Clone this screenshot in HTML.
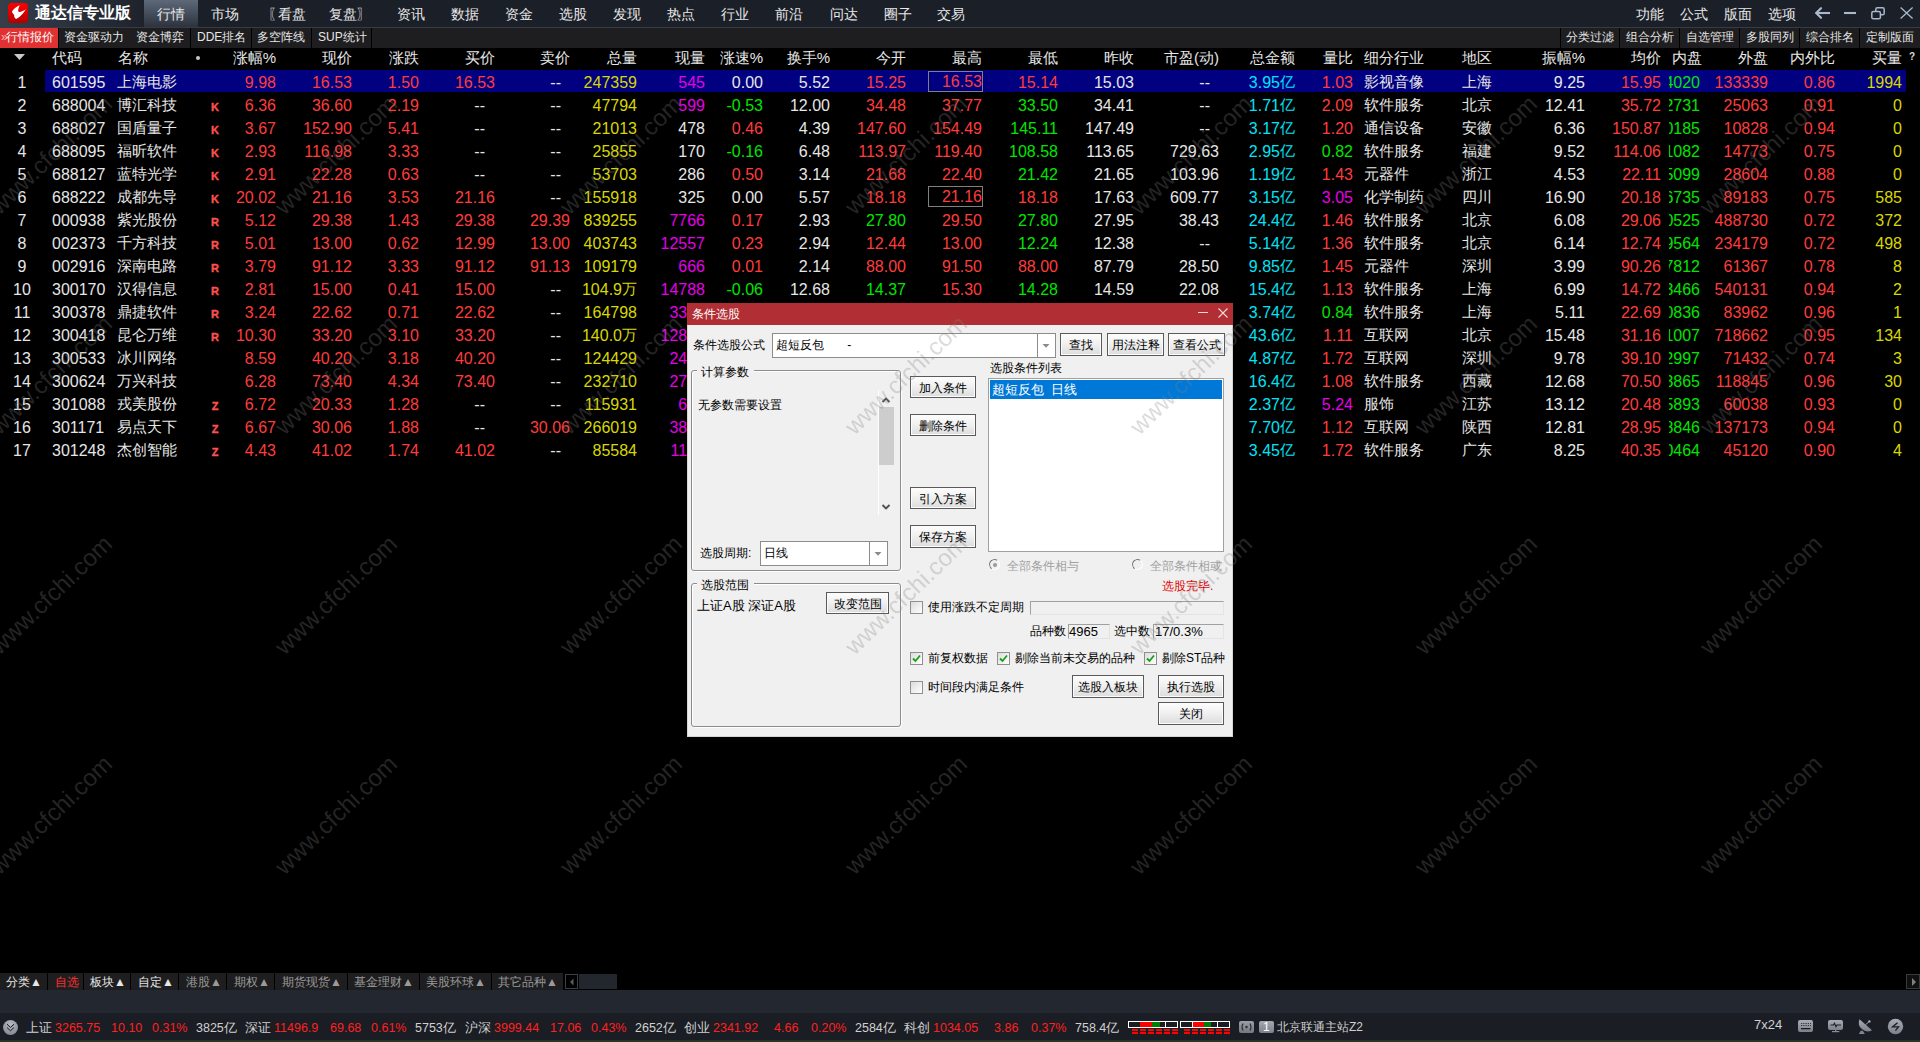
<!DOCTYPE html><html><head><meta charset="utf-8"><title>通达信专业版</title><style>
html,body{margin:0;padding:0;width:1920px;height:1042px;overflow:hidden;background:#000;font-family:'Liberation Sans', sans-serif;}
.t{position:absolute;white-space:nowrap;line-height:1;}
.b{position:absolute;box-sizing:border-box;}
.clip{position:absolute;overflow:hidden;}

</style></head><body>
<div class="b" style="left:0px;top:0px;width:1920px;height:27px;background:#1b1f27;"></div>
<div class="b" style="left:0px;top:0px;width:144px;height:27px;background:linear-gradient(to right,#363e4a,#2a313c 50%,#1e232b);"></div>
<div class="b" style="left:144px;top:0px;width:54px;height:27px;background:linear-gradient(#5d6879,#2c333d);"></div>
<div class="b" style="left:0px;top:27px;width:1920px;height:1px;background:#363c45;"></div>
<div class="b" style="left:8px;top:3px;width:20px;height:20px;border-radius:4px;background:linear-gradient(#ff0000,#b00000);"></div>
<svg style="position:absolute;left:8px;top:3px" width="20" height="20" viewBox="0 0 20 20"><path d="M11.8 2.2 C9 3.2 5.5 5.5 4 8.5 C4.3 10 5.3 11 6.2 11.8 C5.9 13.5 6.5 15.5 8.2 15.9 C11.5 15 15 10.5 18 6.3 C15.5 8 12.5 9.2 10.6 8.8 C9.6 8 10.5 5 11.8 2.2 Z" fill="#fff"/></svg>
<div class="t" style="left:35px;top:5px;font-size:16px;color:#ffffff;font-weight:bold;">通达信专业版</div>
<div class="t" style="left:157px;top:7px;font-size:14px;color:#e8e8e8;">行情</div>
<div class="t" style="left:211px;top:7px;font-size:14px;color:#e8e8e8;">市场</div>
<div class="t" style="left:268px;top:7px;font-size:14px;color:#e8e8e8;">〖</div>
<div class="t" style="left:278px;top:7px;font-size:14px;color:#e8e8e8;">看盘</div>
<div class="t" style="left:329px;top:7px;font-size:14px;color:#e8e8e8;">复盘</div>
<div class="t" style="left:357px;top:7px;font-size:14px;color:#e8e8e8;">〗</div>
<div class="t" style="left:397px;top:7px;font-size:14px;color:#e8e8e8;">资讯</div>
<div class="t" style="left:451px;top:7px;font-size:14px;color:#e8e8e8;">数据</div>
<div class="t" style="left:505px;top:7px;font-size:14px;color:#e8e8e8;">资金</div>
<div class="t" style="left:559px;top:7px;font-size:14px;color:#e8e8e8;">选股</div>
<div class="t" style="left:613px;top:7px;font-size:14px;color:#e8e8e8;">发现</div>
<div class="t" style="left:667px;top:7px;font-size:14px;color:#e8e8e8;">热点</div>
<div class="t" style="left:721px;top:7px;font-size:14px;color:#e8e8e8;">行业</div>
<div class="t" style="left:775px;top:7px;font-size:14px;color:#e8e8e8;">前沿</div>
<div class="t" style="left:830px;top:7px;font-size:14px;color:#e8e8e8;">问达</div>
<div class="t" style="left:884px;top:7px;font-size:14px;color:#e8e8e8;">圈子</div>
<div class="t" style="left:937px;top:7px;font-size:14px;color:#e8e8e8;">交易</div>
<div class="t" style="left:1636px;top:7px;font-size:14px;color:#e8e8e8;">功能</div>
<div class="t" style="left:1680px;top:7px;font-size:14px;color:#e8e8e8;">公式</div>
<div class="t" style="left:1724px;top:7px;font-size:14px;color:#e8e8e8;">版面</div>
<div class="t" style="left:1768px;top:7px;font-size:14px;color:#e8e8e8;">选项</div>
<svg style="position:absolute;left:1810px;top:4px" width="110" height="20" viewBox="0 0 110 20"><path d="M6 9 H20" stroke="#a9b8ce" stroke-width="2.1" fill="none"/><path d="M11 4.2 L6.2 9 L11 13.8" stroke="#a9b8ce" stroke-width="2.2" fill="none" stroke-linecap="round"/><path d="M34 9 H46" stroke="#a9b8ce" stroke-width="2.1"/><rect x="65.8" y="3.8" width="8.4" height="7" rx="1.6" stroke="#a9b8ce" stroke-width="1.5" fill="none"/><rect x="61.8" y="7.6" width="8.6" height="7.2" rx="1.6" stroke="#a9b8ce" stroke-width="1.5" fill="#1b1f27"/><path d="M90.6 3.6 L102.6 14.6 M102.6 3.6 L90.6 14.6" stroke="#a9b8ce" stroke-width="1.3"/></svg>
<div class="b" style="left:0px;top:28px;width:1920px;height:20px;background:#1e1e20;"></div>
<div class="b" style="left:0px;top:28px;width:58px;height:20px;background:#e03232;"></div>
<div class="t" style="left:1px;top:31px;font-size:12px;color:#ffb0b0;">»</div>
<div class="t" style="left:6px;top:31px;font-size:12px;color:#ffffff;">行情报价</div>
<div class="t" style="left:64px;top:31px;font-size:12px;color:#e6e6e6;">资金驱动力</div>
<div class="t" style="left:136px;top:31px;font-size:12px;color:#e6e6e6;">资金博弈</div>
<div class="t" style="left:197px;top:31px;font-size:12px;color:#e6e6e6;">DDE排名</div>
<div class="t" style="left:257px;top:31px;font-size:12px;color:#e6e6e6;">多空阵线</div>
<div class="t" style="left:318px;top:31px;font-size:12px;color:#e6e6e6;">SUP统计</div>
<div class="b" style="left:58px;top:28px;width:1px;height:20px;background:#000;"></div>
<div class="b" style="left:190px;top:28px;width:1px;height:20px;background:#000;"></div>
<div class="b" style="left:251px;top:28px;width:1px;height:20px;background:#000;"></div>
<div class="b" style="left:311px;top:28px;width:1px;height:20px;background:#000;"></div>
<div class="b" style="left:371px;top:28px;width:1px;height:20px;background:#000;"></div>
<div class="t" style="left:1566px;top:31px;font-size:12px;color:#e6e6e6;">分类过滤</div>
<div class="t" style="left:1626px;top:31px;font-size:12px;color:#e6e6e6;">组合分析</div>
<div class="t" style="left:1686px;top:31px;font-size:12px;color:#e6e6e6;">自选管理</div>
<div class="t" style="left:1746px;top:31px;font-size:12px;color:#e6e6e6;">多股同列</div>
<div class="t" style="left:1806px;top:31px;font-size:12px;color:#e6e6e6;">综合排名</div>
<div class="t" style="left:1866px;top:31px;font-size:12px;color:#e6e6e6;">定制版面</div>
<div class="b" style="left:1560px;top:28px;width:1px;height:20px;background:#000;"></div>
<div class="b" style="left:1619px;top:28px;width:1px;height:20px;background:#000;"></div>
<div class="b" style="left:1679px;top:28px;width:1px;height:20px;background:#000;"></div>
<div class="b" style="left:1739px;top:28px;width:1px;height:20px;background:#000;"></div>
<div class="b" style="left:1799px;top:28px;width:1px;height:20px;background:#000;"></div>
<div class="b" style="left:1859px;top:28px;width:1px;height:20px;background:#000;"></div>
<svg style="position:absolute;left:14px;top:54px" width="12" height="8"><path d="M0 0 H11 L5.5 6 Z" fill="#c8c8c8"/></svg>
<div class="t" style="left:52px;top:50px;font-size:15px;color:#e6e6e6;">代码</div>
<div class="t" style="left:118px;top:50px;font-size:15px;color:#e6e6e6;">名称</div>
<div class="b" style="left:196px;top:56px;width:4px;height:4px;border-radius:2px;background:#c8c8c8"></div>
<div class="t" style="right:1644px;top:50px;font-size:15px;color:#e6e6e6;">涨幅%</div>
<div class="t" style="right:1568px;top:50px;font-size:15px;color:#e6e6e6;">现价</div>
<div class="t" style="right:1501px;top:50px;font-size:15px;color:#e6e6e6;">涨跌</div>
<div class="t" style="right:1425px;top:50px;font-size:15px;color:#e6e6e6;">买价</div>
<div class="t" style="right:1350px;top:50px;font-size:15px;color:#e6e6e6;">卖价</div>
<div class="t" style="right:1283px;top:50px;font-size:15px;color:#e6e6e6;">总量</div>
<div class="t" style="right:1215px;top:50px;font-size:15px;color:#e6e6e6;">现量</div>
<div class="t" style="right:1157px;top:50px;font-size:15px;color:#e6e6e6;">涨速%</div>
<div class="t" style="right:1090px;top:50px;font-size:15px;color:#e6e6e6;">换手%</div>
<div class="t" style="right:1014px;top:50px;font-size:15px;color:#e6e6e6;">今开</div>
<div class="t" style="right:938px;top:50px;font-size:15px;color:#e6e6e6;">最高</div>
<div class="t" style="right:862px;top:50px;font-size:15px;color:#e6e6e6;">最低</div>
<div class="t" style="right:786px;top:50px;font-size:15px;color:#e6e6e6;">昨收</div>
<div class="t" style="right:701px;top:50px;font-size:15px;color:#e6e6e6;">市盈(动)</div>
<div class="t" style="right:625px;top:50px;font-size:15px;color:#e6e6e6;">总金额</div>
<div class="t" style="right:567px;top:50px;font-size:15px;color:#e6e6e6;">量比</div>
<div class="t" style="right:335px;top:50px;font-size:15px;color:#e6e6e6;">振幅%</div>
<div class="t" style="right:259px;top:50px;font-size:15px;color:#e6e6e6;">均价</div>
<div class="t" style="right:152px;top:50px;font-size:15px;color:#e6e6e6;">外盘</div>
<div class="t" style="right:85px;top:50px;font-size:15px;color:#e6e6e6;">内外比</div>
<div class="t" style="right:18px;top:50px;font-size:15px;color:#e6e6e6;">买量</div>
<div class="t" style="left:1364px;top:50px;font-size:15px;color:#e6e6e6;">细分行业</div>
<div class="t" style="left:1462px;top:50px;font-size:15px;color:#e6e6e6;">地区</div>
<div class="t" style="left:1672px;top:50px;font-size:15px;color:#e6e6e6;">内盘</div>
<div class="t" style="left:1909px;top:52px;font-size:10px;color:#d8d8d8;font-weight:bold;">?</div>
<div class="b" style="left:45px;top:70px;width:1861px;height:22px;background:#000080;"></div>
<div class="t" style="left:-178px;width:400px;text-align:center;top:75px;font-size:16px;color:#e6e6e6;">1</div>
<div class="t" style="left:52px;top:75px;font-size:16px;color:#e6e6e6;">601595</div>
<div class="t" style="left:117px;top:74px;font-size:15px;color:#e6e6e6;">上海电影</div>
<div class="t" style="right:1644px;top:75px;font-size:16px;color:#ff3c3c;">9.98</div>
<div class="t" style="right:1568px;top:75px;font-size:16px;color:#ff3c3c;">16.53</div>
<div class="t" style="right:1501px;top:75px;font-size:16px;color:#ff3c3c;">1.50</div>
<div class="t" style="right:1425px;top:75px;font-size:16px;color:#ff3c3c;">16.53</div>
<div class="t" style="right:1359px;top:75px;font-size:16px;color:#e6e6e6;">--</div>
<div class="t" style="right:1283px;top:75px;font-size:16px;color:#d8d800;">247359</div>
<div class="t" style="right:1215px;top:75px;font-size:16px;color:#e600e6;">545</div>
<div class="t" style="right:1157px;top:75px;font-size:16px;color:#e6e6e6;">0.00</div>
<div class="t" style="right:1090px;top:75px;font-size:16px;color:#e6e6e6;">5.52</div>
<div class="t" style="right:1014px;top:75px;font-size:16px;color:#ff3c3c;">15.25</div>
<div class="t" style="right:938px;top:74px;font-size:16px;color:#ff3c3c;">16.53</div>
<div class="t" style="right:862px;top:75px;font-size:16px;color:#ff3c3c;">15.14</div>
<div class="t" style="right:786px;top:75px;font-size:16px;color:#e6e6e6;">15.03</div>
<div class="t" style="right:710px;top:75px;font-size:16px;color:#e6e6e6;">--</div>
<div class="t" style="right:640px;top:75px;font-size:16px;color:#00e4f8;">3.95</div>
<div class="t" style="left:1280px;top:74px;font-size:15px;color:#00e4f8;">亿</div>
<div class="t" style="right:567px;top:75px;font-size:16px;color:#ff3c3c;">1.03</div>
<div class="t" style="left:1364px;top:74px;font-size:15px;color:#e6e6e6;">影视音像</div>
<div class="t" style="left:1462px;top:74px;font-size:15px;color:#e6e6e6;">上海</div>
<div class="t" style="right:335px;top:75px;font-size:16px;color:#e6e6e6;">9.25</div>
<div class="t" style="right:259px;top:75px;font-size:16px;color:#ff3c3c;">15.95</div>
<div class="clip" style="left:1669px;top:73px;width:40px;height:20px;"><div class="t" style="right:9px;top:2px;font-size:16px;color:#00e600">114020</div></div>
<div class="t" style="right:152px;top:75px;font-size:16px;color:#ff3c3c;">133339</div>
<div class="t" style="right:85px;top:75px;font-size:16px;color:#ff3c3c;">0.86</div>
<div class="t" style="right:18px;top:75px;font-size:16px;color:#d8d800;">1994</div>
<div class="t" style="left:-178px;width:400px;text-align:center;top:98px;font-size:16px;color:#e6e6e6;">2</div>
<div class="t" style="left:52px;top:98px;font-size:16px;color:#e6e6e6;">688004</div>
<div class="t" style="left:117px;top:97px;font-size:15px;color:#e6e6e6;">博汇科技</div>
<div class="t" style="left:15px;width:400px;text-align:center;top:102px;font-size:11px;color:#ff5050;font-weight:bold;-webkit-text-stroke:0.35px #ff5050;">K</div>
<div class="t" style="right:1644px;top:98px;font-size:16px;color:#ff3c3c;">6.36</div>
<div class="t" style="right:1568px;top:98px;font-size:16px;color:#ff3c3c;">36.60</div>
<div class="t" style="right:1501px;top:98px;font-size:16px;color:#ff3c3c;">2.19</div>
<div class="t" style="right:1435px;top:98px;font-size:16px;color:#e6e6e6;">--</div>
<div class="t" style="right:1359px;top:98px;font-size:16px;color:#e6e6e6;">--</div>
<div class="t" style="right:1283px;top:98px;font-size:16px;color:#d8d800;">47794</div>
<div class="t" style="right:1215px;top:98px;font-size:16px;color:#e600e6;">599</div>
<div class="t" style="right:1157px;top:98px;font-size:16px;color:#00e600;">-0.53</div>
<div class="t" style="right:1090px;top:98px;font-size:16px;color:#e6e6e6;">12.00</div>
<div class="t" style="right:1014px;top:98px;font-size:16px;color:#ff3c3c;">34.48</div>
<div class="t" style="right:938px;top:98px;font-size:16px;color:#ff3c3c;">37.77</div>
<div class="t" style="right:862px;top:98px;font-size:16px;color:#00e600;">33.50</div>
<div class="t" style="right:786px;top:98px;font-size:16px;color:#e6e6e6;">34.41</div>
<div class="t" style="right:710px;top:98px;font-size:16px;color:#e6e6e6;">--</div>
<div class="t" style="right:640px;top:98px;font-size:16px;color:#00e4f8;">1.71</div>
<div class="t" style="left:1280px;top:97px;font-size:15px;color:#00e4f8;">亿</div>
<div class="t" style="right:567px;top:98px;font-size:16px;color:#ff3c3c;">2.09</div>
<div class="t" style="left:1364px;top:97px;font-size:15px;color:#e6e6e6;">软件服务</div>
<div class="t" style="left:1462px;top:97px;font-size:15px;color:#e6e6e6;">北京</div>
<div class="t" style="right:335px;top:98px;font-size:16px;color:#e6e6e6;">12.41</div>
<div class="t" style="right:259px;top:98px;font-size:16px;color:#ff3c3c;">35.72</div>
<div class="clip" style="left:1669px;top:96px;width:40px;height:20px;"><div class="t" style="right:9px;top:2px;font-size:16px;color:#00e600">22731</div></div>
<div class="t" style="right:152px;top:98px;font-size:16px;color:#ff3c3c;">25063</div>
<div class="t" style="right:85px;top:98px;font-size:16px;color:#ff3c3c;">0.91</div>
<div class="t" style="right:18px;top:98px;font-size:16px;color:#d8d800;">0</div>
<div class="t" style="left:-178px;width:400px;text-align:center;top:121px;font-size:16px;color:#e6e6e6;">3</div>
<div class="t" style="left:52px;top:121px;font-size:16px;color:#e6e6e6;">688027</div>
<div class="t" style="left:117px;top:120px;font-size:15px;color:#e6e6e6;">国盾量子</div>
<div class="t" style="left:15px;width:400px;text-align:center;top:125px;font-size:11px;color:#ff5050;font-weight:bold;-webkit-text-stroke:0.35px #ff5050;">K</div>
<div class="t" style="right:1644px;top:121px;font-size:16px;color:#ff3c3c;">3.67</div>
<div class="t" style="right:1568px;top:121px;font-size:16px;color:#ff3c3c;">152.90</div>
<div class="t" style="right:1501px;top:121px;font-size:16px;color:#ff3c3c;">5.41</div>
<div class="t" style="right:1435px;top:121px;font-size:16px;color:#e6e6e6;">--</div>
<div class="t" style="right:1359px;top:121px;font-size:16px;color:#e6e6e6;">--</div>
<div class="t" style="right:1283px;top:121px;font-size:16px;color:#d8d800;">21013</div>
<div class="t" style="right:1215px;top:121px;font-size:16px;color:#e6e6e6;">478</div>
<div class="t" style="right:1157px;top:121px;font-size:16px;color:#ff3c3c;">0.46</div>
<div class="t" style="right:1090px;top:121px;font-size:16px;color:#e6e6e6;">4.39</div>
<div class="t" style="right:1014px;top:121px;font-size:16px;color:#ff3c3c;">147.60</div>
<div class="t" style="right:938px;top:121px;font-size:16px;color:#ff3c3c;">154.49</div>
<div class="t" style="right:862px;top:121px;font-size:16px;color:#00e600;">145.11</div>
<div class="t" style="right:786px;top:121px;font-size:16px;color:#e6e6e6;">147.49</div>
<div class="t" style="right:710px;top:121px;font-size:16px;color:#e6e6e6;">--</div>
<div class="t" style="right:640px;top:121px;font-size:16px;color:#00e4f8;">3.17</div>
<div class="t" style="left:1280px;top:120px;font-size:15px;color:#00e4f8;">亿</div>
<div class="t" style="right:567px;top:121px;font-size:16px;color:#ff3c3c;">1.20</div>
<div class="t" style="left:1364px;top:120px;font-size:15px;color:#e6e6e6;">通信设备</div>
<div class="t" style="left:1462px;top:120px;font-size:15px;color:#e6e6e6;">安徽</div>
<div class="t" style="right:335px;top:121px;font-size:16px;color:#e6e6e6;">6.36</div>
<div class="t" style="right:259px;top:121px;font-size:16px;color:#ff3c3c;">150.87</div>
<div class="clip" style="left:1669px;top:119px;width:40px;height:20px;"><div class="t" style="right:9px;top:2px;font-size:16px;color:#00e600">10185</div></div>
<div class="t" style="right:152px;top:121px;font-size:16px;color:#ff3c3c;">10828</div>
<div class="t" style="right:85px;top:121px;font-size:16px;color:#ff3c3c;">0.94</div>
<div class="t" style="right:18px;top:121px;font-size:16px;color:#d8d800;">0</div>
<div class="t" style="left:-178px;width:400px;text-align:center;top:144px;font-size:16px;color:#e6e6e6;">4</div>
<div class="t" style="left:52px;top:144px;font-size:16px;color:#e6e6e6;">688095</div>
<div class="t" style="left:117px;top:143px;font-size:15px;color:#e6e6e6;">福昕软件</div>
<div class="t" style="left:15px;width:400px;text-align:center;top:148px;font-size:11px;color:#ff5050;font-weight:bold;-webkit-text-stroke:0.35px #ff5050;">K</div>
<div class="t" style="right:1644px;top:144px;font-size:16px;color:#ff3c3c;">2.93</div>
<div class="t" style="right:1568px;top:144px;font-size:16px;color:#ff3c3c;">116.98</div>
<div class="t" style="right:1501px;top:144px;font-size:16px;color:#ff3c3c;">3.33</div>
<div class="t" style="right:1435px;top:144px;font-size:16px;color:#e6e6e6;">--</div>
<div class="t" style="right:1359px;top:144px;font-size:16px;color:#e6e6e6;">--</div>
<div class="t" style="right:1283px;top:144px;font-size:16px;color:#d8d800;">25855</div>
<div class="t" style="right:1215px;top:144px;font-size:16px;color:#e6e6e6;">170</div>
<div class="t" style="right:1157px;top:144px;font-size:16px;color:#00e600;">-0.16</div>
<div class="t" style="right:1090px;top:144px;font-size:16px;color:#e6e6e6;">6.48</div>
<div class="t" style="right:1014px;top:144px;font-size:16px;color:#ff3c3c;">113.97</div>
<div class="t" style="right:938px;top:144px;font-size:16px;color:#ff3c3c;">119.40</div>
<div class="t" style="right:862px;top:144px;font-size:16px;color:#00e600;">108.58</div>
<div class="t" style="right:786px;top:144px;font-size:16px;color:#e6e6e6;">113.65</div>
<div class="t" style="right:701px;top:144px;font-size:16px;color:#e6e6e6;">729.63</div>
<div class="t" style="right:640px;top:144px;font-size:16px;color:#00e4f8;">2.95</div>
<div class="t" style="left:1280px;top:143px;font-size:15px;color:#00e4f8;">亿</div>
<div class="t" style="right:567px;top:144px;font-size:16px;color:#00e600;">0.82</div>
<div class="t" style="left:1364px;top:143px;font-size:15px;color:#e6e6e6;">软件服务</div>
<div class="t" style="left:1462px;top:143px;font-size:15px;color:#e6e6e6;">福建</div>
<div class="t" style="right:335px;top:144px;font-size:16px;color:#e6e6e6;">9.52</div>
<div class="t" style="right:259px;top:144px;font-size:16px;color:#ff3c3c;">114.06</div>
<div class="clip" style="left:1669px;top:142px;width:40px;height:20px;"><div class="t" style="right:9px;top:2px;font-size:16px;color:#00e600">11082</div></div>
<div class="t" style="right:152px;top:144px;font-size:16px;color:#ff3c3c;">14773</div>
<div class="t" style="right:85px;top:144px;font-size:16px;color:#ff3c3c;">0.75</div>
<div class="t" style="right:18px;top:144px;font-size:16px;color:#d8d800;">0</div>
<div class="t" style="left:-178px;width:400px;text-align:center;top:167px;font-size:16px;color:#e6e6e6;">5</div>
<div class="t" style="left:52px;top:167px;font-size:16px;color:#e6e6e6;">688127</div>
<div class="t" style="left:117px;top:166px;font-size:15px;color:#e6e6e6;">蓝特光学</div>
<div class="t" style="left:15px;width:400px;text-align:center;top:171px;font-size:11px;color:#ff5050;font-weight:bold;-webkit-text-stroke:0.35px #ff5050;">K</div>
<div class="t" style="right:1644px;top:167px;font-size:16px;color:#ff3c3c;">2.91</div>
<div class="t" style="right:1568px;top:167px;font-size:16px;color:#ff3c3c;">22.28</div>
<div class="t" style="right:1501px;top:167px;font-size:16px;color:#ff3c3c;">0.63</div>
<div class="t" style="right:1435px;top:167px;font-size:16px;color:#e6e6e6;">--</div>
<div class="t" style="right:1359px;top:167px;font-size:16px;color:#e6e6e6;">--</div>
<div class="t" style="right:1283px;top:167px;font-size:16px;color:#d8d800;">53703</div>
<div class="t" style="right:1215px;top:167px;font-size:16px;color:#e6e6e6;">286</div>
<div class="t" style="right:1157px;top:167px;font-size:16px;color:#ff3c3c;">0.50</div>
<div class="t" style="right:1090px;top:167px;font-size:16px;color:#e6e6e6;">3.14</div>
<div class="t" style="right:1014px;top:167px;font-size:16px;color:#ff3c3c;">21.68</div>
<div class="t" style="right:938px;top:167px;font-size:16px;color:#ff3c3c;">22.40</div>
<div class="t" style="right:862px;top:167px;font-size:16px;color:#00e600;">21.42</div>
<div class="t" style="right:786px;top:167px;font-size:16px;color:#e6e6e6;">21.65</div>
<div class="t" style="right:701px;top:167px;font-size:16px;color:#e6e6e6;">103.96</div>
<div class="t" style="right:640px;top:167px;font-size:16px;color:#00e4f8;">1.19</div>
<div class="t" style="left:1280px;top:166px;font-size:15px;color:#00e4f8;">亿</div>
<div class="t" style="right:567px;top:167px;font-size:16px;color:#ff3c3c;">1.43</div>
<div class="t" style="left:1364px;top:166px;font-size:15px;color:#e6e6e6;">元器件</div>
<div class="t" style="left:1462px;top:166px;font-size:15px;color:#e6e6e6;">浙江</div>
<div class="t" style="right:335px;top:167px;font-size:16px;color:#e6e6e6;">4.53</div>
<div class="t" style="right:259px;top:167px;font-size:16px;color:#ff3c3c;">22.11</div>
<div class="clip" style="left:1669px;top:165px;width:40px;height:20px;"><div class="t" style="right:9px;top:2px;font-size:16px;color:#00e600">25099</div></div>
<div class="t" style="right:152px;top:167px;font-size:16px;color:#ff3c3c;">28604</div>
<div class="t" style="right:85px;top:167px;font-size:16px;color:#ff3c3c;">0.88</div>
<div class="t" style="right:18px;top:167px;font-size:16px;color:#d8d800;">0</div>
<div class="t" style="left:-178px;width:400px;text-align:center;top:190px;font-size:16px;color:#e6e6e6;">6</div>
<div class="t" style="left:52px;top:190px;font-size:16px;color:#e6e6e6;">688222</div>
<div class="t" style="left:117px;top:189px;font-size:15px;color:#e6e6e6;">成都先导</div>
<div class="t" style="left:15px;width:400px;text-align:center;top:194px;font-size:11px;color:#ff5050;font-weight:bold;-webkit-text-stroke:0.35px #ff5050;">K</div>
<div class="t" style="right:1644px;top:190px;font-size:16px;color:#ff3c3c;">20.02</div>
<div class="t" style="right:1568px;top:190px;font-size:16px;color:#ff3c3c;">21.16</div>
<div class="t" style="right:1501px;top:190px;font-size:16px;color:#ff3c3c;">3.53</div>
<div class="t" style="right:1425px;top:190px;font-size:16px;color:#ff3c3c;">21.16</div>
<div class="t" style="right:1359px;top:190px;font-size:16px;color:#e6e6e6;">--</div>
<div class="t" style="right:1283px;top:190px;font-size:16px;color:#d8d800;">155918</div>
<div class="t" style="right:1215px;top:190px;font-size:16px;color:#e6e6e6;">325</div>
<div class="t" style="right:1157px;top:190px;font-size:16px;color:#e6e6e6;">0.00</div>
<div class="t" style="right:1090px;top:190px;font-size:16px;color:#e6e6e6;">5.57</div>
<div class="t" style="right:1014px;top:190px;font-size:16px;color:#ff3c3c;">18.18</div>
<div class="t" style="right:938px;top:189px;font-size:16px;color:#ff3c3c;">21.16</div>
<div class="t" style="right:862px;top:190px;font-size:16px;color:#ff3c3c;">18.18</div>
<div class="t" style="right:786px;top:190px;font-size:16px;color:#e6e6e6;">17.63</div>
<div class="t" style="right:701px;top:190px;font-size:16px;color:#e6e6e6;">609.77</div>
<div class="t" style="right:640px;top:190px;font-size:16px;color:#00e4f8;">3.15</div>
<div class="t" style="left:1280px;top:189px;font-size:15px;color:#00e4f8;">亿</div>
<div class="t" style="right:567px;top:190px;font-size:16px;color:#e600e6;">3.05</div>
<div class="t" style="left:1364px;top:189px;font-size:15px;color:#e6e6e6;">化学制药</div>
<div class="t" style="left:1462px;top:189px;font-size:15px;color:#e6e6e6;">四川</div>
<div class="t" style="right:335px;top:190px;font-size:16px;color:#e6e6e6;">16.90</div>
<div class="t" style="right:259px;top:190px;font-size:16px;color:#ff3c3c;">20.18</div>
<div class="clip" style="left:1669px;top:188px;width:40px;height:20px;"><div class="t" style="right:9px;top:2px;font-size:16px;color:#00e600">66735</div></div>
<div class="t" style="right:152px;top:190px;font-size:16px;color:#ff3c3c;">89183</div>
<div class="t" style="right:85px;top:190px;font-size:16px;color:#ff3c3c;">0.75</div>
<div class="t" style="right:18px;top:190px;font-size:16px;color:#d8d800;">585</div>
<div class="t" style="left:-178px;width:400px;text-align:center;top:213px;font-size:16px;color:#e6e6e6;">7</div>
<div class="t" style="left:52px;top:213px;font-size:16px;color:#e6e6e6;">000938</div>
<div class="t" style="left:117px;top:212px;font-size:15px;color:#e6e6e6;">紫光股份</div>
<div class="t" style="left:15px;width:400px;text-align:center;top:217px;font-size:11px;color:#ff5050;font-weight:bold;-webkit-text-stroke:0.35px #ff5050;">R</div>
<div class="t" style="right:1644px;top:213px;font-size:16px;color:#ff3c3c;">5.12</div>
<div class="t" style="right:1568px;top:213px;font-size:16px;color:#ff3c3c;">29.38</div>
<div class="t" style="right:1501px;top:213px;font-size:16px;color:#ff3c3c;">1.43</div>
<div class="t" style="right:1425px;top:213px;font-size:16px;color:#ff3c3c;">29.38</div>
<div class="t" style="right:1350px;top:213px;font-size:16px;color:#ff3c3c;">29.39</div>
<div class="t" style="right:1283px;top:213px;font-size:16px;color:#d8d800;">839255</div>
<div class="t" style="right:1215px;top:213px;font-size:16px;color:#e600e6;">7766</div>
<div class="t" style="right:1157px;top:213px;font-size:16px;color:#ff3c3c;">0.17</div>
<div class="t" style="right:1090px;top:213px;font-size:16px;color:#e6e6e6;">2.93</div>
<div class="t" style="right:1014px;top:213px;font-size:16px;color:#00e600;">27.80</div>
<div class="t" style="right:938px;top:213px;font-size:16px;color:#ff3c3c;">29.50</div>
<div class="t" style="right:862px;top:213px;font-size:16px;color:#00e600;">27.80</div>
<div class="t" style="right:786px;top:213px;font-size:16px;color:#e6e6e6;">27.95</div>
<div class="t" style="right:701px;top:213px;font-size:16px;color:#e6e6e6;">38.43</div>
<div class="t" style="right:640px;top:213px;font-size:16px;color:#00e4f8;">24.4</div>
<div class="t" style="left:1280px;top:212px;font-size:15px;color:#00e4f8;">亿</div>
<div class="t" style="right:567px;top:213px;font-size:16px;color:#ff3c3c;">1.46</div>
<div class="t" style="left:1364px;top:212px;font-size:15px;color:#e6e6e6;">软件服务</div>
<div class="t" style="left:1462px;top:212px;font-size:15px;color:#e6e6e6;">北京</div>
<div class="t" style="right:335px;top:213px;font-size:16px;color:#e6e6e6;">6.08</div>
<div class="t" style="right:259px;top:213px;font-size:16px;color:#ff3c3c;">29.06</div>
<div class="clip" style="left:1669px;top:211px;width:40px;height:20px;"><div class="t" style="right:9px;top:2px;font-size:16px;color:#00e600">350525</div></div>
<div class="t" style="right:152px;top:213px;font-size:16px;color:#ff3c3c;">488730</div>
<div class="t" style="right:85px;top:213px;font-size:16px;color:#ff3c3c;">0.72</div>
<div class="t" style="right:18px;top:213px;font-size:16px;color:#d8d800;">372</div>
<div class="t" style="left:-178px;width:400px;text-align:center;top:236px;font-size:16px;color:#e6e6e6;">8</div>
<div class="t" style="left:52px;top:236px;font-size:16px;color:#e6e6e6;">002373</div>
<div class="t" style="left:117px;top:235px;font-size:15px;color:#e6e6e6;">千方科技</div>
<div class="t" style="left:15px;width:400px;text-align:center;top:240px;font-size:11px;color:#ff5050;font-weight:bold;-webkit-text-stroke:0.35px #ff5050;">R</div>
<div class="t" style="right:1644px;top:236px;font-size:16px;color:#ff3c3c;">5.01</div>
<div class="t" style="right:1568px;top:236px;font-size:16px;color:#ff3c3c;">13.00</div>
<div class="t" style="right:1501px;top:236px;font-size:16px;color:#ff3c3c;">0.62</div>
<div class="t" style="right:1425px;top:236px;font-size:16px;color:#ff3c3c;">12.99</div>
<div class="t" style="right:1350px;top:236px;font-size:16px;color:#ff3c3c;">13.00</div>
<div class="t" style="right:1283px;top:236px;font-size:16px;color:#d8d800;">403743</div>
<div class="t" style="right:1215px;top:236px;font-size:16px;color:#e600e6;">12557</div>
<div class="t" style="right:1157px;top:236px;font-size:16px;color:#ff3c3c;">0.23</div>
<div class="t" style="right:1090px;top:236px;font-size:16px;color:#e6e6e6;">2.94</div>
<div class="t" style="right:1014px;top:236px;font-size:16px;color:#ff3c3c;">12.44</div>
<div class="t" style="right:938px;top:236px;font-size:16px;color:#ff3c3c;">13.00</div>
<div class="t" style="right:862px;top:236px;font-size:16px;color:#00e600;">12.24</div>
<div class="t" style="right:786px;top:236px;font-size:16px;color:#e6e6e6;">12.38</div>
<div class="t" style="right:710px;top:236px;font-size:16px;color:#e6e6e6;">--</div>
<div class="t" style="right:640px;top:236px;font-size:16px;color:#00e4f8;">5.14</div>
<div class="t" style="left:1280px;top:235px;font-size:15px;color:#00e4f8;">亿</div>
<div class="t" style="right:567px;top:236px;font-size:16px;color:#ff3c3c;">1.36</div>
<div class="t" style="left:1364px;top:235px;font-size:15px;color:#e6e6e6;">软件服务</div>
<div class="t" style="left:1462px;top:235px;font-size:15px;color:#e6e6e6;">北京</div>
<div class="t" style="right:335px;top:236px;font-size:16px;color:#e6e6e6;">6.14</div>
<div class="t" style="right:259px;top:236px;font-size:16px;color:#ff3c3c;">12.74</div>
<div class="clip" style="left:1669px;top:234px;width:40px;height:20px;"><div class="t" style="right:9px;top:2px;font-size:16px;color:#00e600">169564</div></div>
<div class="t" style="right:152px;top:236px;font-size:16px;color:#ff3c3c;">234179</div>
<div class="t" style="right:85px;top:236px;font-size:16px;color:#ff3c3c;">0.72</div>
<div class="t" style="right:18px;top:236px;font-size:16px;color:#d8d800;">498</div>
<div class="t" style="left:-178px;width:400px;text-align:center;top:259px;font-size:16px;color:#e6e6e6;">9</div>
<div class="t" style="left:52px;top:259px;font-size:16px;color:#e6e6e6;">002916</div>
<div class="t" style="left:117px;top:258px;font-size:15px;color:#e6e6e6;">深南电路</div>
<div class="t" style="left:15px;width:400px;text-align:center;top:263px;font-size:11px;color:#ff5050;font-weight:bold;-webkit-text-stroke:0.35px #ff5050;">R</div>
<div class="t" style="right:1644px;top:259px;font-size:16px;color:#ff3c3c;">3.79</div>
<div class="t" style="right:1568px;top:259px;font-size:16px;color:#ff3c3c;">91.12</div>
<div class="t" style="right:1501px;top:259px;font-size:16px;color:#ff3c3c;">3.33</div>
<div class="t" style="right:1425px;top:259px;font-size:16px;color:#ff3c3c;">91.12</div>
<div class="t" style="right:1350px;top:259px;font-size:16px;color:#ff3c3c;">91.13</div>
<div class="t" style="right:1283px;top:259px;font-size:16px;color:#d8d800;">109179</div>
<div class="t" style="right:1215px;top:259px;font-size:16px;color:#e600e6;">666</div>
<div class="t" style="right:1157px;top:259px;font-size:16px;color:#ff3c3c;">0.01</div>
<div class="t" style="right:1090px;top:259px;font-size:16px;color:#e6e6e6;">2.14</div>
<div class="t" style="right:1014px;top:259px;font-size:16px;color:#ff3c3c;">88.00</div>
<div class="t" style="right:938px;top:259px;font-size:16px;color:#ff3c3c;">91.50</div>
<div class="t" style="right:862px;top:259px;font-size:16px;color:#ff3c3c;">88.00</div>
<div class="t" style="right:786px;top:259px;font-size:16px;color:#e6e6e6;">87.79</div>
<div class="t" style="right:701px;top:259px;font-size:16px;color:#e6e6e6;">28.50</div>
<div class="t" style="right:640px;top:259px;font-size:16px;color:#00e4f8;">9.85</div>
<div class="t" style="left:1280px;top:258px;font-size:15px;color:#00e4f8;">亿</div>
<div class="t" style="right:567px;top:259px;font-size:16px;color:#ff3c3c;">1.45</div>
<div class="t" style="left:1364px;top:258px;font-size:15px;color:#e6e6e6;">元器件</div>
<div class="t" style="left:1462px;top:258px;font-size:15px;color:#e6e6e6;">深圳</div>
<div class="t" style="right:335px;top:259px;font-size:16px;color:#e6e6e6;">3.99</div>
<div class="t" style="right:259px;top:259px;font-size:16px;color:#ff3c3c;">90.26</div>
<div class="clip" style="left:1669px;top:257px;width:40px;height:20px;"><div class="t" style="right:9px;top:2px;font-size:16px;color:#00e600">47812</div></div>
<div class="t" style="right:152px;top:259px;font-size:16px;color:#ff3c3c;">61367</div>
<div class="t" style="right:85px;top:259px;font-size:16px;color:#ff3c3c;">0.78</div>
<div class="t" style="right:18px;top:259px;font-size:16px;color:#d8d800;">8</div>
<div class="t" style="left:-178px;width:400px;text-align:center;top:282px;font-size:16px;color:#e6e6e6;">10</div>
<div class="t" style="left:52px;top:282px;font-size:16px;color:#e6e6e6;">300170</div>
<div class="t" style="left:117px;top:281px;font-size:15px;color:#e6e6e6;">汉得信息</div>
<div class="t" style="left:15px;width:400px;text-align:center;top:286px;font-size:11px;color:#ff5050;font-weight:bold;-webkit-text-stroke:0.35px #ff5050;">R</div>
<div class="t" style="right:1644px;top:282px;font-size:16px;color:#ff3c3c;">2.81</div>
<div class="t" style="right:1568px;top:282px;font-size:16px;color:#ff3c3c;">15.00</div>
<div class="t" style="right:1501px;top:282px;font-size:16px;color:#ff3c3c;">0.41</div>
<div class="t" style="right:1425px;top:282px;font-size:16px;color:#ff3c3c;">15.00</div>
<div class="t" style="right:1359px;top:282px;font-size:16px;color:#e6e6e6;">--</div>
<div class="t" style="right:1298px;top:282px;font-size:16px;color:#d8d800;">104.9</div>
<div class="t" style="left:622px;top:281px;font-size:15px;color:#d8d800;">万</div>
<div class="t" style="right:1215px;top:282px;font-size:16px;color:#e600e6;">14788</div>
<div class="t" style="right:1157px;top:282px;font-size:16px;color:#00e600;">-0.06</div>
<div class="t" style="right:1090px;top:282px;font-size:16px;color:#e6e6e6;">12.68</div>
<div class="t" style="right:1014px;top:282px;font-size:16px;color:#00e600;">14.37</div>
<div class="t" style="right:938px;top:282px;font-size:16px;color:#ff3c3c;">15.30</div>
<div class="t" style="right:862px;top:282px;font-size:16px;color:#00e600;">14.28</div>
<div class="t" style="right:786px;top:282px;font-size:16px;color:#e6e6e6;">14.59</div>
<div class="t" style="right:701px;top:282px;font-size:16px;color:#e6e6e6;">22.08</div>
<div class="t" style="right:640px;top:282px;font-size:16px;color:#00e4f8;">15.4</div>
<div class="t" style="left:1280px;top:281px;font-size:15px;color:#00e4f8;">亿</div>
<div class="t" style="right:567px;top:282px;font-size:16px;color:#ff3c3c;">1.13</div>
<div class="t" style="left:1364px;top:281px;font-size:15px;color:#e6e6e6;">软件服务</div>
<div class="t" style="left:1462px;top:281px;font-size:15px;color:#e6e6e6;">上海</div>
<div class="t" style="right:335px;top:282px;font-size:16px;color:#e6e6e6;">6.99</div>
<div class="t" style="right:259px;top:282px;font-size:16px;color:#ff3c3c;">14.72</div>
<div class="clip" style="left:1669px;top:280px;width:40px;height:20px;"><div class="t" style="right:9px;top:2px;font-size:16px;color:#00e600">503466</div></div>
<div class="t" style="right:152px;top:282px;font-size:16px;color:#ff3c3c;">540131</div>
<div class="t" style="right:85px;top:282px;font-size:16px;color:#ff3c3c;">0.94</div>
<div class="t" style="right:18px;top:282px;font-size:16px;color:#d8d800;">2</div>
<div class="t" style="left:-178px;width:400px;text-align:center;top:305px;font-size:16px;color:#e6e6e6;">11</div>
<div class="t" style="left:52px;top:305px;font-size:16px;color:#e6e6e6;">300378</div>
<div class="t" style="left:117px;top:304px;font-size:15px;color:#e6e6e6;">鼎捷软件</div>
<div class="t" style="left:15px;width:400px;text-align:center;top:309px;font-size:11px;color:#ff5050;font-weight:bold;-webkit-text-stroke:0.35px #ff5050;">R</div>
<div class="t" style="right:1644px;top:305px;font-size:16px;color:#ff3c3c;">3.24</div>
<div class="t" style="right:1568px;top:305px;font-size:16px;color:#ff3c3c;">22.62</div>
<div class="t" style="right:1501px;top:305px;font-size:16px;color:#ff3c3c;">0.71</div>
<div class="t" style="right:1425px;top:305px;font-size:16px;color:#ff3c3c;">22.62</div>
<div class="t" style="right:1359px;top:305px;font-size:16px;color:#e6e6e6;">--</div>
<div class="t" style="right:1283px;top:305px;font-size:16px;color:#d8d800;">164798</div>
<div class="t" style="right:1215px;top:305px;font-size:16px;color:#e600e6;">3321</div>
<div class="t" style="right:1157px;top:305px;font-size:16px;color:#ff3c3c;">0.10</div>
<div class="t" style="right:1090px;top:305px;font-size:16px;color:#e6e6e6;">3.00</div>
<div class="t" style="right:1014px;top:305px;font-size:16px;color:#ff3c3c;">22.00</div>
<div class="t" style="right:938px;top:305px;font-size:16px;color:#ff3c3c;">23.00</div>
<div class="t" style="right:862px;top:305px;font-size:16px;color:#00e600;">21.80</div>
<div class="t" style="right:786px;top:305px;font-size:16px;color:#e6e6e6;">21.91</div>
<div class="t" style="right:710px;top:305px;font-size:16px;color:#e6e6e6;">--</div>
<div class="t" style="right:640px;top:305px;font-size:16px;color:#00e4f8;">3.74</div>
<div class="t" style="left:1280px;top:304px;font-size:15px;color:#00e4f8;">亿</div>
<div class="t" style="right:567px;top:305px;font-size:16px;color:#00e600;">0.84</div>
<div class="t" style="left:1364px;top:304px;font-size:15px;color:#e6e6e6;">软件服务</div>
<div class="t" style="left:1462px;top:304px;font-size:15px;color:#e6e6e6;">上海</div>
<div class="t" style="right:335px;top:305px;font-size:16px;color:#e6e6e6;">5.11</div>
<div class="t" style="right:259px;top:305px;font-size:16px;color:#ff3c3c;">22.69</div>
<div class="clip" style="left:1669px;top:303px;width:40px;height:20px;"><div class="t" style="right:9px;top:2px;font-size:16px;color:#00e600">80836</div></div>
<div class="t" style="right:152px;top:305px;font-size:16px;color:#ff3c3c;">83962</div>
<div class="t" style="right:85px;top:305px;font-size:16px;color:#ff3c3c;">0.96</div>
<div class="t" style="right:18px;top:305px;font-size:16px;color:#d8d800;">1</div>
<div class="t" style="left:-178px;width:400px;text-align:center;top:328px;font-size:16px;color:#e6e6e6;">12</div>
<div class="t" style="left:52px;top:328px;font-size:16px;color:#e6e6e6;">300418</div>
<div class="t" style="left:117px;top:327px;font-size:15px;color:#e6e6e6;">昆仑万维</div>
<div class="t" style="left:15px;width:400px;text-align:center;top:332px;font-size:11px;color:#ff5050;font-weight:bold;-webkit-text-stroke:0.35px #ff5050;">R</div>
<div class="t" style="right:1644px;top:328px;font-size:16px;color:#ff3c3c;">10.30</div>
<div class="t" style="right:1568px;top:328px;font-size:16px;color:#ff3c3c;">33.20</div>
<div class="t" style="right:1501px;top:328px;font-size:16px;color:#ff3c3c;">3.10</div>
<div class="t" style="right:1425px;top:328px;font-size:16px;color:#ff3c3c;">33.20</div>
<div class="t" style="right:1359px;top:328px;font-size:16px;color:#e6e6e6;">--</div>
<div class="t" style="right:1298px;top:328px;font-size:16px;color:#d8d800;">140.0</div>
<div class="t" style="left:622px;top:327px;font-size:15px;color:#d8d800;">万</div>
<div class="t" style="right:1215px;top:328px;font-size:16px;color:#e600e6;">12812</div>
<div class="t" style="right:1157px;top:328px;font-size:16px;color:#ff3c3c;">0.10</div>
<div class="t" style="right:1090px;top:328px;font-size:16px;color:#e6e6e6;">3.00</div>
<div class="t" style="right:1014px;top:328px;font-size:16px;color:#00e600;">30.00</div>
<div class="t" style="right:938px;top:328px;font-size:16px;color:#ff3c3c;">33.20</div>
<div class="t" style="right:862px;top:328px;font-size:16px;color:#00e600;">29.00</div>
<div class="t" style="right:786px;top:328px;font-size:16px;color:#e6e6e6;">30.10</div>
<div class="t" style="right:710px;top:328px;font-size:16px;color:#e6e6e6;">--</div>
<div class="t" style="right:640px;top:328px;font-size:16px;color:#00e4f8;">43.6</div>
<div class="t" style="left:1280px;top:327px;font-size:15px;color:#00e4f8;">亿</div>
<div class="t" style="right:567px;top:328px;font-size:16px;color:#ff3c3c;">1.11</div>
<div class="t" style="left:1364px;top:327px;font-size:15px;color:#e6e6e6;">互联网</div>
<div class="t" style="left:1462px;top:327px;font-size:15px;color:#e6e6e6;">北京</div>
<div class="t" style="right:335px;top:328px;font-size:16px;color:#e6e6e6;">15.48</div>
<div class="t" style="right:259px;top:328px;font-size:16px;color:#ff3c3c;">31.16</div>
<div class="clip" style="left:1669px;top:326px;width:40px;height:20px;"><div class="t" style="right:9px;top:2px;font-size:16px;color:#00e600">681007</div></div>
<div class="t" style="right:152px;top:328px;font-size:16px;color:#ff3c3c;">718662</div>
<div class="t" style="right:85px;top:328px;font-size:16px;color:#ff3c3c;">0.95</div>
<div class="t" style="right:18px;top:328px;font-size:16px;color:#d8d800;">134</div>
<div class="t" style="left:-178px;width:400px;text-align:center;top:351px;font-size:16px;color:#e6e6e6;">13</div>
<div class="t" style="left:52px;top:351px;font-size:16px;color:#e6e6e6;">300533</div>
<div class="t" style="left:117px;top:350px;font-size:15px;color:#e6e6e6;">冰川网络</div>
<div class="t" style="right:1644px;top:351px;font-size:16px;color:#ff3c3c;">8.59</div>
<div class="t" style="right:1568px;top:351px;font-size:16px;color:#ff3c3c;">40.20</div>
<div class="t" style="right:1501px;top:351px;font-size:16px;color:#ff3c3c;">3.18</div>
<div class="t" style="right:1425px;top:351px;font-size:16px;color:#ff3c3c;">40.20</div>
<div class="t" style="right:1359px;top:351px;font-size:16px;color:#e6e6e6;">--</div>
<div class="t" style="right:1283px;top:351px;font-size:16px;color:#d8d800;">124429</div>
<div class="t" style="right:1215px;top:351px;font-size:16px;color:#e600e6;">2421</div>
<div class="t" style="right:1157px;top:351px;font-size:16px;color:#ff3c3c;">0.10</div>
<div class="t" style="right:1090px;top:351px;font-size:16px;color:#e6e6e6;">3.00</div>
<div class="t" style="right:1014px;top:351px;font-size:16px;color:#00e600;">37.00</div>
<div class="t" style="right:938px;top:351px;font-size:16px;color:#ff3c3c;">40.20</div>
<div class="t" style="right:862px;top:351px;font-size:16px;color:#00e600;">36.00</div>
<div class="t" style="right:786px;top:351px;font-size:16px;color:#e6e6e6;">37.02</div>
<div class="t" style="right:710px;top:351px;font-size:16px;color:#e6e6e6;">--</div>
<div class="t" style="right:640px;top:351px;font-size:16px;color:#00e4f8;">4.87</div>
<div class="t" style="left:1280px;top:350px;font-size:15px;color:#00e4f8;">亿</div>
<div class="t" style="right:567px;top:351px;font-size:16px;color:#ff3c3c;">1.72</div>
<div class="t" style="left:1364px;top:350px;font-size:15px;color:#e6e6e6;">互联网</div>
<div class="t" style="left:1462px;top:350px;font-size:15px;color:#e6e6e6;">深圳</div>
<div class="t" style="right:335px;top:351px;font-size:16px;color:#e6e6e6;">9.78</div>
<div class="t" style="right:259px;top:351px;font-size:16px;color:#ff3c3c;">39.10</div>
<div class="clip" style="left:1669px;top:349px;width:40px;height:20px;"><div class="t" style="right:9px;top:2px;font-size:16px;color:#00e600">52997</div></div>
<div class="t" style="right:152px;top:351px;font-size:16px;color:#ff3c3c;">71432</div>
<div class="t" style="right:85px;top:351px;font-size:16px;color:#ff3c3c;">0.74</div>
<div class="t" style="right:18px;top:351px;font-size:16px;color:#d8d800;">3</div>
<div class="t" style="left:-178px;width:400px;text-align:center;top:374px;font-size:16px;color:#e6e6e6;">14</div>
<div class="t" style="left:52px;top:374px;font-size:16px;color:#e6e6e6;">300624</div>
<div class="t" style="left:117px;top:373px;font-size:15px;color:#e6e6e6;">万兴科技</div>
<div class="t" style="right:1644px;top:374px;font-size:16px;color:#ff3c3c;">6.28</div>
<div class="t" style="right:1568px;top:374px;font-size:16px;color:#ff3c3c;">73.40</div>
<div class="t" style="right:1501px;top:374px;font-size:16px;color:#ff3c3c;">4.34</div>
<div class="t" style="right:1425px;top:374px;font-size:16px;color:#ff3c3c;">73.40</div>
<div class="t" style="right:1359px;top:374px;font-size:16px;color:#e6e6e6;">--</div>
<div class="t" style="right:1283px;top:374px;font-size:16px;color:#d8d800;">232710</div>
<div class="t" style="right:1215px;top:374px;font-size:16px;color:#e600e6;">2712</div>
<div class="t" style="right:1157px;top:374px;font-size:16px;color:#ff3c3c;">0.10</div>
<div class="t" style="right:1090px;top:374px;font-size:16px;color:#e6e6e6;">3.00</div>
<div class="t" style="right:1014px;top:374px;font-size:16px;color:#00e600;">69.00</div>
<div class="t" style="right:938px;top:374px;font-size:16px;color:#ff3c3c;">73.40</div>
<div class="t" style="right:862px;top:374px;font-size:16px;color:#00e600;">68.00</div>
<div class="t" style="right:786px;top:374px;font-size:16px;color:#e6e6e6;">69.06</div>
<div class="t" style="right:710px;top:374px;font-size:16px;color:#e6e6e6;">--</div>
<div class="t" style="right:640px;top:374px;font-size:16px;color:#00e4f8;">16.4</div>
<div class="t" style="left:1280px;top:373px;font-size:15px;color:#00e4f8;">亿</div>
<div class="t" style="right:567px;top:374px;font-size:16px;color:#ff3c3c;">1.08</div>
<div class="t" style="left:1364px;top:373px;font-size:15px;color:#e6e6e6;">软件服务</div>
<div class="t" style="left:1462px;top:373px;font-size:15px;color:#e6e6e6;">西藏</div>
<div class="t" style="right:335px;top:374px;font-size:16px;color:#e6e6e6;">12.68</div>
<div class="t" style="right:259px;top:374px;font-size:16px;color:#ff3c3c;">70.50</div>
<div class="clip" style="left:1669px;top:372px;width:40px;height:20px;"><div class="t" style="right:9px;top:2px;font-size:16px;color:#00e600">113865</div></div>
<div class="t" style="right:152px;top:374px;font-size:16px;color:#ff3c3c;">118845</div>
<div class="t" style="right:85px;top:374px;font-size:16px;color:#ff3c3c;">0.96</div>
<div class="t" style="right:18px;top:374px;font-size:16px;color:#d8d800;">30</div>
<div class="t" style="left:-178px;width:400px;text-align:center;top:397px;font-size:16px;color:#e6e6e6;">15</div>
<div class="t" style="left:52px;top:397px;font-size:16px;color:#e6e6e6;">301088</div>
<div class="t" style="left:117px;top:396px;font-size:15px;color:#e6e6e6;">戎美股份</div>
<div class="t" style="left:15px;width:400px;text-align:center;top:401px;font-size:11px;color:#ff5050;font-weight:bold;-webkit-text-stroke:0.35px #ff5050;">Z</div>
<div class="t" style="right:1644px;top:397px;font-size:16px;color:#ff3c3c;">6.72</div>
<div class="t" style="right:1568px;top:397px;font-size:16px;color:#ff3c3c;">20.33</div>
<div class="t" style="right:1501px;top:397px;font-size:16px;color:#ff3c3c;">1.28</div>
<div class="t" style="right:1435px;top:397px;font-size:16px;color:#e6e6e6;">--</div>
<div class="t" style="right:1359px;top:397px;font-size:16px;color:#e6e6e6;">--</div>
<div class="t" style="right:1283px;top:397px;font-size:16px;color:#d8d800;">115931</div>
<div class="t" style="right:1215px;top:397px;font-size:16px;color:#e600e6;">612</div>
<div class="t" style="right:1157px;top:397px;font-size:16px;color:#ff3c3c;">0.10</div>
<div class="t" style="right:1090px;top:397px;font-size:16px;color:#e6e6e6;">3.00</div>
<div class="t" style="right:1014px;top:397px;font-size:16px;color:#00e600;">19.00</div>
<div class="t" style="right:938px;top:397px;font-size:16px;color:#ff3c3c;">20.33</div>
<div class="t" style="right:862px;top:397px;font-size:16px;color:#00e600;">19.00</div>
<div class="t" style="right:786px;top:397px;font-size:16px;color:#e6e6e6;">19.05</div>
<div class="t" style="right:710px;top:397px;font-size:16px;color:#e6e6e6;">--</div>
<div class="t" style="right:640px;top:397px;font-size:16px;color:#00e4f8;">2.37</div>
<div class="t" style="left:1280px;top:396px;font-size:15px;color:#00e4f8;">亿</div>
<div class="t" style="right:567px;top:397px;font-size:16px;color:#e600e6;">5.24</div>
<div class="t" style="left:1364px;top:396px;font-size:15px;color:#e6e6e6;">服饰</div>
<div class="t" style="left:1462px;top:396px;font-size:15px;color:#e6e6e6;">江苏</div>
<div class="t" style="right:335px;top:397px;font-size:16px;color:#e6e6e6;">13.12</div>
<div class="t" style="right:259px;top:397px;font-size:16px;color:#ff3c3c;">20.48</div>
<div class="clip" style="left:1669px;top:395px;width:40px;height:20px;"><div class="t" style="right:9px;top:2px;font-size:16px;color:#00e600">55893</div></div>
<div class="t" style="right:152px;top:397px;font-size:16px;color:#ff3c3c;">60038</div>
<div class="t" style="right:85px;top:397px;font-size:16px;color:#ff3c3c;">0.93</div>
<div class="t" style="right:18px;top:397px;font-size:16px;color:#d8d800;">0</div>
<div class="t" style="left:-178px;width:400px;text-align:center;top:420px;font-size:16px;color:#e6e6e6;">16</div>
<div class="t" style="left:52px;top:420px;font-size:16px;color:#e6e6e6;">301171</div>
<div class="t" style="left:117px;top:419px;font-size:15px;color:#e6e6e6;">易点天下</div>
<div class="t" style="left:15px;width:400px;text-align:center;top:424px;font-size:11px;color:#ff5050;font-weight:bold;-webkit-text-stroke:0.35px #ff5050;">Z</div>
<div class="t" style="right:1644px;top:420px;font-size:16px;color:#ff3c3c;">6.67</div>
<div class="t" style="right:1568px;top:420px;font-size:16px;color:#ff3c3c;">30.06</div>
<div class="t" style="right:1501px;top:420px;font-size:16px;color:#ff3c3c;">1.88</div>
<div class="t" style="right:1435px;top:420px;font-size:16px;color:#e6e6e6;">--</div>
<div class="t" style="right:1350px;top:420px;font-size:16px;color:#ff3c3c;">30.06</div>
<div class="t" style="right:1283px;top:420px;font-size:16px;color:#d8d800;">266019</div>
<div class="t" style="right:1215px;top:420px;font-size:16px;color:#e600e6;">3812</div>
<div class="t" style="right:1157px;top:420px;font-size:16px;color:#ff3c3c;">0.10</div>
<div class="t" style="right:1090px;top:420px;font-size:16px;color:#e6e6e6;">3.00</div>
<div class="t" style="right:1014px;top:420px;font-size:16px;color:#00e600;">28.00</div>
<div class="t" style="right:938px;top:420px;font-size:16px;color:#ff3c3c;">30.06</div>
<div class="t" style="right:862px;top:420px;font-size:16px;color:#00e600;">28.00</div>
<div class="t" style="right:786px;top:420px;font-size:16px;color:#e6e6e6;">28.18</div>
<div class="t" style="right:710px;top:420px;font-size:16px;color:#e6e6e6;">--</div>
<div class="t" style="right:640px;top:420px;font-size:16px;color:#00e4f8;">7.70</div>
<div class="t" style="left:1280px;top:419px;font-size:15px;color:#00e4f8;">亿</div>
<div class="t" style="right:567px;top:420px;font-size:16px;color:#ff3c3c;">1.12</div>
<div class="t" style="left:1364px;top:419px;font-size:15px;color:#e6e6e6;">互联网</div>
<div class="t" style="left:1462px;top:419px;font-size:15px;color:#e6e6e6;">陕西</div>
<div class="t" style="right:335px;top:420px;font-size:16px;color:#e6e6e6;">12.81</div>
<div class="t" style="right:259px;top:420px;font-size:16px;color:#ff3c3c;">28.95</div>
<div class="clip" style="left:1669px;top:418px;width:40px;height:20px;"><div class="t" style="right:9px;top:2px;font-size:16px;color:#00e600">128846</div></div>
<div class="t" style="right:152px;top:420px;font-size:16px;color:#ff3c3c;">137173</div>
<div class="t" style="right:85px;top:420px;font-size:16px;color:#ff3c3c;">0.94</div>
<div class="t" style="right:18px;top:420px;font-size:16px;color:#d8d800;">0</div>
<div class="t" style="left:-178px;width:400px;text-align:center;top:443px;font-size:16px;color:#e6e6e6;">17</div>
<div class="t" style="left:52px;top:443px;font-size:16px;color:#e6e6e6;">301248</div>
<div class="t" style="left:117px;top:442px;font-size:15px;color:#e6e6e6;">杰创智能</div>
<div class="t" style="left:15px;width:400px;text-align:center;top:447px;font-size:11px;color:#ff5050;font-weight:bold;-webkit-text-stroke:0.35px #ff5050;">Z</div>
<div class="t" style="right:1644px;top:443px;font-size:16px;color:#ff3c3c;">4.43</div>
<div class="t" style="right:1568px;top:443px;font-size:16px;color:#ff3c3c;">41.02</div>
<div class="t" style="right:1501px;top:443px;font-size:16px;color:#ff3c3c;">1.74</div>
<div class="t" style="right:1425px;top:443px;font-size:16px;color:#ff3c3c;">41.02</div>
<div class="t" style="right:1359px;top:443px;font-size:16px;color:#e6e6e6;">--</div>
<div class="t" style="right:1283px;top:443px;font-size:16px;color:#d8d800;">85584</div>
<div class="t" style="right:1215px;top:443px;font-size:16px;color:#e600e6;">1121</div>
<div class="t" style="right:1157px;top:443px;font-size:16px;color:#ff3c3c;">0.10</div>
<div class="t" style="right:1090px;top:443px;font-size:16px;color:#e6e6e6;">3.00</div>
<div class="t" style="right:1014px;top:443px;font-size:16px;color:#00e600;">39.00</div>
<div class="t" style="right:938px;top:443px;font-size:16px;color:#ff3c3c;">41.02</div>
<div class="t" style="right:862px;top:443px;font-size:16px;color:#00e600;">38.00</div>
<div class="t" style="right:786px;top:443px;font-size:16px;color:#e6e6e6;">39.28</div>
<div class="t" style="right:710px;top:443px;font-size:16px;color:#e6e6e6;">--</div>
<div class="t" style="right:640px;top:443px;font-size:16px;color:#00e4f8;">3.45</div>
<div class="t" style="left:1280px;top:442px;font-size:15px;color:#00e4f8;">亿</div>
<div class="t" style="right:567px;top:443px;font-size:16px;color:#ff3c3c;">1.72</div>
<div class="t" style="left:1364px;top:442px;font-size:15px;color:#e6e6e6;">软件服务</div>
<div class="t" style="left:1462px;top:442px;font-size:15px;color:#e6e6e6;">广东</div>
<div class="t" style="right:335px;top:443px;font-size:16px;color:#e6e6e6;">8.25</div>
<div class="t" style="right:259px;top:443px;font-size:16px;color:#ff3c3c;">40.35</div>
<div class="clip" style="left:1669px;top:441px;width:40px;height:20px;"><div class="t" style="right:9px;top:2px;font-size:16px;color:#00e600">40464</div></div>
<div class="t" style="right:152px;top:443px;font-size:16px;color:#ff3c3c;">45120</div>
<div class="t" style="right:85px;top:443px;font-size:16px;color:#ff3c3c;">0.90</div>
<div class="t" style="right:18px;top:443px;font-size:16px;color:#d8d800;">4</div>
<div class="b" style="left:928px;top:71px;width:55px;height:21px;border:1px solid #808080;"></div>
<div class="b" style="left:928px;top:186px;width:55px;height:21px;border:1px solid #808080;"></div>
<div class="b" style="left:687px;top:303px;width:546px;height:434px;background:#f0f0f0;border:1px solid #d4d4d4;border-top:none;"></div>
<div class="b" style="left:687px;top:303px;width:546px;height:22px;background:#b12e34;"></div>
<div class="t" style="left:692px;top:308px;font-size:12px;color:#ffffff;">条件选股</div>
<svg style="position:absolute;left:1195px;top:305px" width="36" height="16"><path d="M3 7.5 H13" stroke="#f4d8d8" stroke-width="1"/><path d="M23.5 3.5 L32.5 12.5 M32.5 3.5 L23.5 12.5" stroke="#f4d8d8" stroke-width="1.1"/></svg>
<div class="t" style="left:693px;top:339px;font-size:12px;color:#000;">条件选股公式</div>
<div class="b" style="left:772px;top:333px;width:284px;height:25px;border:1px solid #8c8c8c;background:#fff;"></div>
<div class="b" style="left:1037px;top:334px;width:1px;height:23px;background:#8c8c8c;"></div>
<svg style="position:absolute;left:1041px;top:343px" width="10" height="6"><path d="M1.5 1 H8.5 L5 4.8 Z" fill="#8a8a8a"/></svg>
<div class="t" style="left:776px;top:339px;font-size:12px;color:#000;">超短反包&nbsp;&nbsp;&nbsp;&nbsp;&nbsp;&nbsp;&nbsp;-</div>
<div class="b" style="left:1060px;top:333px;width:42px;height:23px;border:1px solid #5a5a5a;background:linear-gradient(#fdfdfd,#f1f1f1 45%,#dcdcdc);"><div class="b" style="left:0;top:0;right:0;bottom:0;border:1px solid #fcfcfc;"></div></div>
<div class="t" style="left:1060px;width:42px;text-align:center;top:339px;font-size:12px;color:#000">查找</div>
<div class="b" style="left:1107px;top:333px;width:57px;height:23px;border:1px solid #5a5a5a;background:linear-gradient(#fdfdfd,#f1f1f1 45%,#dcdcdc);"><div class="b" style="left:0;top:0;right:0;bottom:0;border:1px solid #fcfcfc;"></div></div>
<div class="t" style="left:1107px;width:57px;text-align:center;top:339px;font-size:12px;color:#000">用法注释</div>
<div class="b" style="left:1168px;top:333px;width:57px;height:23px;border:1px solid #5a5a5a;background:linear-gradient(#fdfdfd,#f1f1f1 45%,#dcdcdc);"><div class="b" style="left:0;top:0;right:0;bottom:0;border:1px solid #fcfcfc;"></div></div>
<div class="t" style="left:1168px;width:57px;text-align:center;top:339px;font-size:12px;color:#000">查看公式</div>
<div class="b" style="left:692px;top:371px;width:210px;height:201px;border:1px solid #ffffff;border-radius:3px;"></div>
<div class="b" style="left:691px;top:370px;width:210px;height:201px;border:1px solid #8c8c8c;border-radius:3px;"></div>
<div class="b" style="left:697px;top:368px;width:57px;height:5px;background:#f0f0f0;"></div>
<div class="t" style="left:701px;top:366px;font-size:12px;color:#000;">计算参数</div>
<div class="t" style="left:698px;top:399px;font-size:12px;color:#000;">无参数需要设置</div>
<div class="b" style="left:878px;top:390px;width:1px;height:125px;background:#ffffff;"></div>
<div class="b" style="left:879px;top:407px;width:15px;height:58px;background:#cdcdcd;"></div>
<svg style="position:absolute;left:880px;top:396px" width="12" height="8"><path d="M2.5 6 L6 2.5 L9.5 6" stroke="#505050" stroke-width="1.9" fill="none"/></svg>
<svg style="position:absolute;left:880px;top:503px" width="12" height="8"><path d="M2.5 2 L6 5.5 L9.5 2" stroke="#505050" stroke-width="1.9" fill="none"/></svg>
<div class="t" style="left:700px;top:547px;font-size:12px;color:#000;">选股周期:</div>
<div class="b" style="left:760px;top:541px;width:128px;height:25px;border:1px solid #8c8c8c;background:#fff;"></div>
<div class="b" style="left:869px;top:542px;width:1px;height:23px;background:#8c8c8c;"></div>
<svg style="position:absolute;left:873px;top:551px" width="10" height="6"><path d="M1.5 1 H8.5 L5 4.8 Z" fill="#8a8a8a"/></svg>
<div class="t" style="left:764px;top:547px;font-size:12px;color:#000;">日线</div>
<div class="b" style="left:692px;top:584px;width:210px;height:144px;border:1px solid #ffffff;border-radius:3px;"></div>
<div class="b" style="left:691px;top:583px;width:210px;height:144px;border:1px solid #8c8c8c;border-radius:3px;"></div>
<div class="b" style="left:697px;top:581px;width:57px;height:5px;background:#f0f0f0;"></div>
<div class="t" style="left:701px;top:579px;font-size:12px;color:#000;">选股范围</div>
<div class="t" style="left:697px;top:599px;font-size:13px;color:#000;">上证A股 深证A股</div>
<div class="b" style="left:826px;top:592px;width:63px;height:22px;border:1px solid #5a5a5a;background:linear-gradient(#fdfdfd,#f1f1f1 45%,#dcdcdc);"><div class="b" style="left:0;top:0;right:0;bottom:0;border:1px solid #fcfcfc;"></div></div>
<div class="t" style="left:826px;width:63px;text-align:center;top:598px;font-size:12px;color:#000">改变范围</div>
<div class="b" style="left:910px;top:376px;width:66px;height:22px;border:1px solid #5a5a5a;background:linear-gradient(#fdfdfd,#f1f1f1 45%,#dcdcdc);"><div class="b" style="left:0;top:0;right:0;bottom:0;border:1px solid #fcfcfc;"></div></div>
<div class="t" style="left:910px;width:66px;text-align:center;top:382px;font-size:12px;color:#000">加入条件</div>
<div class="b" style="left:910px;top:414px;width:66px;height:22px;border:1px solid #5a5a5a;background:linear-gradient(#fdfdfd,#f1f1f1 45%,#dcdcdc);"><div class="b" style="left:0;top:0;right:0;bottom:0;border:1px solid #fcfcfc;"></div></div>
<div class="t" style="left:910px;width:66px;text-align:center;top:420px;font-size:12px;color:#000">删除条件</div>
<div class="b" style="left:910px;top:487px;width:66px;height:22px;border:1px solid #5a5a5a;background:linear-gradient(#fdfdfd,#f1f1f1 45%,#dcdcdc);"><div class="b" style="left:0;top:0;right:0;bottom:0;border:1px solid #fcfcfc;"></div></div>
<div class="t" style="left:910px;width:66px;text-align:center;top:493px;font-size:12px;color:#000">引入方案</div>
<div class="b" style="left:910px;top:525px;width:66px;height:23px;border:1px solid #5a5a5a;background:linear-gradient(#fdfdfd,#f1f1f1 45%,#dcdcdc);"><div class="b" style="left:0;top:0;right:0;bottom:0;border:1px solid #fcfcfc;"></div></div>
<div class="t" style="left:910px;width:66px;text-align:center;top:531px;font-size:12px;color:#000">保存方案</div>
<div class="t" style="left:990px;top:362px;font-size:12px;color:#000;">选股条件列表</div>
<div class="b" style="left:988px;top:378px;width:236px;height:174px;background:#fff;border:1px solid #a0a0a0;"></div>
<div class="b" style="left:990px;top:380px;width:232px;height:19px;background:#0078d7;"></div>
<div class="t" style="left:992px;top:383px;font-size:13px;color:#ffffff;">超短反包&nbsp;&nbsp;日线</div>
<div class="b" style="left:989px;top:559px;width:11px;height:11px;border-radius:6px;border:1.5px solid #ffffff;border-top-color:#7a7a7a;border-left-color:#7a7a7a;transform:rotate(-10deg);background:#f0f0f0;"></div>
<div class="b" style="left:1132px;top:559px;width:11px;height:11px;border-radius:6px;border:1.5px solid #ffffff;border-top-color:#7a7a7a;border-left-color:#7a7a7a;transform:rotate(-10deg);background:#f0f0f0;"></div>
<div class="b" style="left:993px;top:563px;width:4px;height:4px;border-radius:2px;background:#9a9a9a;"></div>
<div class="t" style="left:1007px;top:560px;font-size:12px;color:#a0a0a0;">全部条件相与</div>
<div class="t" style="left:1150px;top:560px;font-size:12px;color:#a0a0a0;">全部条件相或</div>
<div class="t" style="left:1162px;top:580px;font-size:12px;color:#e00000;">选股完毕.</div>
<div class="b" style="left:910px;top:601px;width:13px;height:13px;border:1px solid #8f8f8f;background:linear-gradient(135deg,#dcdcdc,#ffffff);"></div>
<div class="t" style="left:928px;top:601px;font-size:12px;color:#000;">使用涨跌不定周期</div>
<div class="b" style="left:1030px;top:601px;width:194px;height:14px;border:1px solid #e3e3e3;border-top-color:#a0a0a0;border-left-color:#a0a0a0;"></div>
<div class="t" style="left:1030px;top:625px;font-size:12px;color:#000;">品种数</div>
<div class="b" style="left:1068px;top:624px;width:42px;height:15px;border:1px solid #e3e3e3;border-top-color:#a0a0a0;border-left-color:#a0a0a0;"></div>
<div class="t" style="left:1069px;top:625px;font-size:13px;color:#000;">4965</div>
<div class="t" style="left:1114px;top:625px;font-size:12px;color:#000;">选中数</div>
<div class="b" style="left:1153px;top:624px;width:71px;height:15px;border:1px solid #e3e3e3;border-top-color:#a0a0a0;border-left-color:#a0a0a0;"></div>
<div class="t" style="left:1155px;top:625px;font-size:13px;color:#000;">17/0.3%</div>
<div class="b" style="left:910px;top:652px;width:13px;height:13px;border:1px solid #8f8f8f;background:linear-gradient(135deg,#dcdcdc,#ffffff);"></div>
<svg style="position:absolute;left:910px;top:652px" width="13" height="13"><path d="M3 6.5 L5.5 9 L10 3.5" stroke="#16a016" stroke-width="1.8" fill="none"/></svg>
<div class="t" style="left:928px;top:652px;font-size:12px;color:#000;">前复权数据</div>
<div class="b" style="left:997px;top:652px;width:13px;height:13px;border:1px solid #8f8f8f;background:linear-gradient(135deg,#dcdcdc,#ffffff);"></div>
<svg style="position:absolute;left:997px;top:652px" width="13" height="13"><path d="M3 6.5 L5.5 9 L10 3.5" stroke="#16a016" stroke-width="1.8" fill="none"/></svg>
<div class="t" style="left:1015px;top:652px;font-size:12px;color:#000;">剔除当前未交易的品种</div>
<div class="b" style="left:1144px;top:652px;width:13px;height:13px;border:1px solid #8f8f8f;background:linear-gradient(135deg,#dcdcdc,#ffffff);"></div>
<svg style="position:absolute;left:1144px;top:652px" width="13" height="13"><path d="M3 6.5 L5.5 9 L10 3.5" stroke="#16a016" stroke-width="1.8" fill="none"/></svg>
<div class="t" style="left:1162px;top:652px;font-size:12px;color:#000;">剔除ST品种</div>
<div class="b" style="left:910px;top:681px;width:13px;height:13px;border:1px solid #8f8f8f;background:linear-gradient(135deg,#dcdcdc,#ffffff);"></div>
<div class="t" style="left:928px;top:681px;font-size:12px;color:#000;">时间段内满足条件</div>
<div class="b" style="left:1072px;top:675px;width:72px;height:23px;border:1px solid #5a5a5a;background:linear-gradient(#fdfdfd,#f1f1f1 45%,#dcdcdc);"><div class="b" style="left:0;top:0;right:0;bottom:0;border:1px solid #fcfcfc;"></div></div>
<div class="t" style="left:1072px;width:72px;text-align:center;top:681px;font-size:12px;color:#000">选股入板块</div>
<div class="b" style="left:1158px;top:675px;width:66px;height:23px;border:1px solid #5a5a5a;background:linear-gradient(#fdfdfd,#f1f1f1 45%,#dcdcdc);"><div class="b" style="left:0;top:0;right:0;bottom:0;border:1px solid #fcfcfc;"></div></div>
<div class="t" style="left:1158px;width:66px;text-align:center;top:681px;font-size:12px;color:#000">执行选股</div>
<div class="b" style="left:1158px;top:702px;width:66px;height:23px;border:1px solid #5a5a5a;background:linear-gradient(#fdfdfd,#f1f1f1 45%,#dcdcdc);"><div class="b" style="left:0;top:0;right:0;bottom:0;border:1px solid #fcfcfc;"></div></div>
<div class="t" style="left:1158px;width:66px;text-align:center;top:708px;font-size:12px;color:#000">关闭</div>
<div class="b" style="left:0px;top:973px;width:563px;height:17px;background:#1e1e20;"></div>
<div class="t" style="left:6px;top:976px;font-size:12px;color:#e6e6e6;">分类▲</div>
<div class="t" style="left:55px;top:976px;font-size:12px;color:#ff3030;">自选</div>
<div class="t" style="left:90px;top:976px;font-size:12px;color:#e6e6e6;">板块▲</div>
<div class="t" style="left:138px;top:976px;font-size:12px;color:#e6e6e6;">自定▲</div>
<div class="t" style="left:186px;top:976px;font-size:12px;color:#9a9a9a;">港股▲</div>
<div class="t" style="left:234px;top:976px;font-size:12px;color:#9a9a9a;">期权▲</div>
<div class="t" style="left:282px;top:976px;font-size:12px;color:#9a9a9a;">期货现货▲</div>
<div class="t" style="left:354px;top:976px;font-size:12px;color:#9a9a9a;">基金理财▲</div>
<div class="t" style="left:426px;top:976px;font-size:12px;color:#9a9a9a;">美股环球▲</div>
<div class="t" style="left:498px;top:976px;font-size:12px;color:#9a9a9a;">其它品种▲</div>
<div class="b" style="left:47px;top:973px;width:1px;height:17px;background:#000;"></div>
<div class="b" style="left:83px;top:973px;width:1px;height:17px;background:#000;"></div>
<div class="b" style="left:130px;top:973px;width:1px;height:17px;background:#000;"></div>
<div class="b" style="left:178px;top:973px;width:1px;height:17px;background:#000;"></div>
<div class="b" style="left:226px;top:973px;width:1px;height:17px;background:#000;"></div>
<div class="b" style="left:274px;top:973px;width:1px;height:17px;background:#000;"></div>
<div class="b" style="left:347px;top:973px;width:1px;height:17px;background:#000;"></div>
<div class="b" style="left:419px;top:973px;width:1px;height:17px;background:#000;"></div>
<div class="b" style="left:491px;top:973px;width:1px;height:17px;background:#000;"></div>
<div class="b" style="left:563px;top:973px;width:1px;height:17px;background:#000;"></div>
<div class="b" style="left:565px;top:974px;width:13px;height:15px;border:1px solid #3a4048;background:#000;"></div>
<svg style="position:absolute;left:567px;top:977px" width="10" height="10"><path d="M6.5 1.5 L3 5 L6.5 8.5 Z" fill="#555b63"/></svg>
<div class="b" style="left:579px;top:974px;width:38px;height:15px;background:#22262d;"></div>
<div class="b" style="left:1906px;top:974px;width:14px;height:15px;border:1px solid #3a3a3a;background:#101010;"></div>
<svg style="position:absolute;left:1909px;top:977px" width="10" height="10"><path d="M3 1 L7 5 L3 9 Z" fill="#808080"/></svg>
<div class="b" style="left:0px;top:990px;width:1920px;height:23px;background:#232830;"></div>
<div class="b" style="left:0px;top:1013px;width:1920px;height:29px;background:#1a1d23;"></div>
<div class="b" style="left:0px;top:1040px;width:1920px;height:2px;background:#2a3328;"></div>
<div class="b" style="left:3px;top:1020px;width:15px;height:15px;border-radius:8px;background:radial-gradient(circle at 50% 30%,#b4b9c2,#8a8f98 70%,#7a7f88);"></div>
<svg style="position:absolute;left:3px;top:1020px" width="15" height="15"><path d="M4 4.2 L7.5 7.4 L11 4.2 M4 7.5 L7.5 10.8 L11 7.5" stroke="#15171c" stroke-width="1" fill="none"/></svg>
<div class="t" style="left:26px;top:1022px;font-size:12.5px;color:#d0d0d0;">上证</div>
<div class="t" style="left:55px;top:1022px;font-size:12.5px;color:#ff2020;">3265.75</div>
<div class="t" style="left:111px;top:1022px;font-size:12.5px;color:#ff2020;">10.10</div>
<div class="t" style="left:152px;top:1022px;font-size:12.5px;color:#ff2020;">0.31%</div>
<div class="t" style="left:196px;top:1022px;font-size:12.5px;color:#d0d0d0;">3825亿</div>
<div class="t" style="left:245px;top:1022px;font-size:12.5px;color:#d0d0d0;">深证</div>
<div class="t" style="left:274px;top:1022px;font-size:12.5px;color:#ff2020;">11496.9</div>
<div class="t" style="left:330px;top:1022px;font-size:12.5px;color:#ff2020;">69.68</div>
<div class="t" style="left:371px;top:1022px;font-size:12.5px;color:#ff2020;">0.61%</div>
<div class="t" style="left:415px;top:1022px;font-size:12.5px;color:#d0d0d0;">5753亿</div>
<div class="t" style="left:465px;top:1022px;font-size:12.5px;color:#d0d0d0;">沪深</div>
<div class="t" style="left:494px;top:1022px;font-size:12.5px;color:#ff2020;">3999.44</div>
<div class="t" style="left:550px;top:1022px;font-size:12.5px;color:#ff2020;">17.06</div>
<div class="t" style="left:591px;top:1022px;font-size:12.5px;color:#ff2020;">0.43%</div>
<div class="t" style="left:635px;top:1022px;font-size:12.5px;color:#d0d0d0;">2652亿</div>
<div class="t" style="left:684px;top:1022px;font-size:12.5px;color:#d0d0d0;">创业</div>
<div class="t" style="left:713px;top:1022px;font-size:12.5px;color:#ff2020;">2341.92</div>
<div class="t" style="left:774px;top:1022px;font-size:12.5px;color:#ff2020;">4.66</div>
<div class="t" style="left:811px;top:1022px;font-size:12.5px;color:#ff2020;">0.20%</div>
<div class="t" style="left:855px;top:1022px;font-size:12.5px;color:#d0d0d0;">2584亿</div>
<div class="t" style="left:904px;top:1022px;font-size:12.5px;color:#d0d0d0;">科创</div>
<div class="t" style="left:933px;top:1022px;font-size:12.5px;color:#ff2020;">1034.05</div>
<div class="t" style="left:994px;top:1022px;font-size:12.5px;color:#ff2020;">3.86</div>
<div class="t" style="left:1031px;top:1022px;font-size:12.5px;color:#ff2020;">0.37%</div>
<div class="t" style="left:1075px;top:1022px;font-size:12.5px;color:#d0d0d0;">758.4亿</div>
<div class="b" style="left:1128px;top:1021px;width:50px;height:7px;border:1px solid #ffffff;background:#1a1d23;"></div>
<div class="b" style="left:1165px;top:1021px;width:1px;height:7px;background:#ffffff;"></div>
<div class="b" style="left:1140px;top:1022px;width:12px;height:5px;background:#ff0000;"></div>
<div class="b" style="left:1152px;top:1022px;width:8px;height:5px;background:#008000;"></div>
<div class="b" style="left:1132px;top:1029px;width:6px;height:2px;background:#ff0000;"></div>
<div class="b" style="left:1132px;top:1032px;width:6px;height:2px;background:#ff0000;"></div>
<div class="b" style="left:1140px;top:1029px;width:6px;height:2px;background:#ff0000;"></div>
<div class="b" style="left:1140px;top:1032px;width:6px;height:2px;background:#ff0000;"></div>
<div class="b" style="left:1148px;top:1029px;width:6px;height:2px;background:#ff0000;"></div>
<div class="b" style="left:1148px;top:1032px;width:6px;height:2px;background:#ff0000;"></div>
<div class="b" style="left:1156px;top:1029px;width:6px;height:2px;background:#ff0000;"></div>
<div class="b" style="left:1156px;top:1032px;width:6px;height:2px;background:#ff0000;"></div>
<div class="b" style="left:1164px;top:1029px;width:6px;height:2px;background:#ff0000;"></div>
<div class="b" style="left:1164px;top:1032px;width:6px;height:2px;background:#ff0000;"></div>
<div class="b" style="left:1172px;top:1029px;width:6px;height:2px;background:#ff0000;"></div>
<div class="b" style="left:1172px;top:1032px;width:6px;height:2px;background:#ff0000;"></div>
<div class="b" style="left:1180px;top:1021px;width:50px;height:7px;border:1px solid #ffffff;background:#1a1d23;"></div>
<div class="b" style="left:1192px;top:1021px;width:1px;height:7px;background:#ffffff;"></div>
<div class="b" style="left:1217px;top:1021px;width:1px;height:7px;background:#ffffff;"></div>
<div class="b" style="left:1193px;top:1022px;width:11px;height:5px;background:#ff0000;"></div>
<div class="b" style="left:1204px;top:1022px;width:7px;height:5px;background:#008000;"></div>
<div class="b" style="left:1184px;top:1029px;width:6px;height:2px;background:#ff0000;"></div>
<div class="b" style="left:1184px;top:1032px;width:6px;height:2px;background:#ff0000;"></div>
<div class="b" style="left:1192px;top:1029px;width:6px;height:2px;background:#ff0000;"></div>
<div class="b" style="left:1192px;top:1032px;width:6px;height:2px;background:#ff0000;"></div>
<div class="b" style="left:1200px;top:1029px;width:6px;height:2px;background:#ff0000;"></div>
<div class="b" style="left:1200px;top:1032px;width:6px;height:2px;background:#ff0000;"></div>
<div class="b" style="left:1208px;top:1029px;width:6px;height:2px;background:#ff0000;"></div>
<div class="b" style="left:1208px;top:1032px;width:6px;height:2px;background:#ff0000;"></div>
<div class="b" style="left:1216px;top:1029px;width:6px;height:2px;background:#ff0000;"></div>
<div class="b" style="left:1216px;top:1032px;width:6px;height:2px;background:#ff0000;"></div>
<div class="b" style="left:1224px;top:1029px;width:6px;height:2px;background:#ff0000;"></div>
<div class="b" style="left:1224px;top:1032px;width:6px;height:2px;background:#ff0000;"></div>
<div class="b" style="left:1239px;top:1021px;width:15px;height:12px;background:linear-gradient(#9a9ea6,#74787f);border-radius:2px;"></div>
<svg style="position:absolute;left:1239px;top:1021px" width="15" height="12"><path d="M4 2.5 Q2 6 4 9.5 M11 2.5 Q13 6 11 9.5" stroke="#2a2d33" stroke-width="1.1" fill="none"/><circle cx="7.5" cy="6" r="1.2" fill="#2a2d33"/></svg>
<div class="b" style="left:1259px;top:1021px;width:15px;height:12px;background:linear-gradient(#a4a8b0,#7c8088);border-radius:2px;"></div>
<div class="t" style="left:1263px;top:1021px;font-size:12px;color:#ffffff;">1</div>
<div class="t" style="left:1277px;top:1021px;font-size:12px;color:#d0d0d0;">北京联通主站Z2</div>
<div class="t" style="left:1754px;top:1018px;font-size:13px;color:#d0d0d0;">7x24</div>
<svg style="position:absolute;left:1796px;top:1018px" width="110" height="20" viewBox="0 0 110 20"><defs><linearGradient id="ig" x1="0" y1="0" x2="0" y2="1"><stop offset="0" stop-color="#a8adb5"/><stop offset="1" stop-color="#7c8189"/></linearGradient></defs><rect x="2" y="2" width="15" height="12" rx="2" fill="url(#ig)"/><rect x="5.00" y="5" width="0.8" height="1" fill="#1a1d23"/><rect x="6.80" y="5" width="0.8" height="1" fill="#1a1d23"/><rect x="8.60" y="5" width="0.8" height="1" fill="#1a1d23"/><rect x="10.40" y="5" width="0.8" height="1" fill="#1a1d23"/><rect x="12.20" y="5" width="0.8" height="1" fill="#1a1d23"/><rect x="14.00" y="5" width="0.8" height="1" fill="#1a1d23"/><rect x="5.00" y="7" width="0.8" height="1" fill="#1a1d23"/><rect x="6.80" y="7" width="0.8" height="1" fill="#1a1d23"/><rect x="8.60" y="7" width="0.8" height="1" fill="#1a1d23"/><rect x="10.40" y="7" width="0.8" height="1" fill="#1a1d23"/><rect x="12.20" y="7" width="0.8" height="1" fill="#1a1d23"/><rect x="14.00" y="7" width="0.8" height="1" fill="#1a1d23"/><rect x="5" y="10" width="9.5" height="1.3" fill="#1a1d23"/><rect x="32" y="2" width="15" height="10" rx="2" fill="url(#ig)"/><path d="M34.5 7 H37.5 L38.5 5.3 L40 8.8 L41 7 H45" stroke="#1a1d23" stroke-width="1.1" fill="none"/><rect x="39" y="12" width="1.3" height="1.5" fill="#8a8e96"/><rect x="36" y="13" width="7.3" height="1.2" fill="#8a8e96"/><path d="M63.5 1.2 A 8.9 8.9 0 0 0 76 12.3 Z" fill="url(#ig)"/><path d="M69.5 6.75 L73 3.8" stroke="#9ca1a9" stroke-width="1"/><circle cx="73.4" cy="3.4" r="1.2" fill="#a8adb5"/><path d="M64.8 12.8 L62.8 16 H68.8 L66.8 12.8 Z" fill="#80858d"/><circle cx="99.5" cy="8.5" r="7.7" fill="url(#ig)"/><path d="M101.5 4.8 L96.6 8.9 H102.5 L99.4 12.6" stroke="#1a1d23" stroke-width="1.3" fill="none" stroke-linejoin="miter"/></svg>
<div class="t" style="left:-49px;top:143px;width:200px;text-align:center;font-size:24px;color:rgba(128,128,128,0.29);transform:rotate(-44deg);pointer-events:none;">www.cfchi.com</div>
<div class="t" style="left:236px;top:143px;width:200px;text-align:center;font-size:24px;color:rgba(128,128,128,0.29);transform:rotate(-44deg);pointer-events:none;">www.cfchi.com</div>
<div class="t" style="left:521px;top:143px;width:200px;text-align:center;font-size:24px;color:rgba(128,128,128,0.29);transform:rotate(-44deg);pointer-events:none;">www.cfchi.com</div>
<div class="t" style="left:806px;top:143px;width:200px;text-align:center;font-size:24px;color:rgba(128,128,128,0.29);transform:rotate(-44deg);pointer-events:none;">www.cfchi.com</div>
<div class="t" style="left:1091px;top:143px;width:200px;text-align:center;font-size:24px;color:rgba(128,128,128,0.29);transform:rotate(-44deg);pointer-events:none;">www.cfchi.com</div>
<div class="t" style="left:1376px;top:143px;width:200px;text-align:center;font-size:24px;color:rgba(128,128,128,0.29);transform:rotate(-44deg);pointer-events:none;">www.cfchi.com</div>
<div class="t" style="left:1661px;top:143px;width:200px;text-align:center;font-size:24px;color:rgba(128,128,128,0.29);transform:rotate(-44deg);pointer-events:none;">www.cfchi.com</div>
<div class="t" style="left:-49px;top:363px;width:200px;text-align:center;font-size:24px;color:rgba(128,128,128,0.29);transform:rotate(-44deg);pointer-events:none;">www.cfchi.com</div>
<div class="t" style="left:236px;top:363px;width:200px;text-align:center;font-size:24px;color:rgba(128,128,128,0.29);transform:rotate(-44deg);pointer-events:none;">www.cfchi.com</div>
<div class="t" style="left:521px;top:363px;width:200px;text-align:center;font-size:24px;color:rgba(128,128,128,0.29);transform:rotate(-44deg);pointer-events:none;">www.cfchi.com</div>
<div class="t" style="left:806px;top:363px;width:200px;text-align:center;font-size:24px;color:rgba(128,128,128,0.29);transform:rotate(-44deg);pointer-events:none;">www.cfchi.com</div>
<div class="t" style="left:1091px;top:363px;width:200px;text-align:center;font-size:24px;color:rgba(128,128,128,0.29);transform:rotate(-44deg);pointer-events:none;">www.cfchi.com</div>
<div class="t" style="left:1376px;top:363px;width:200px;text-align:center;font-size:24px;color:rgba(128,128,128,0.29);transform:rotate(-44deg);pointer-events:none;">www.cfchi.com</div>
<div class="t" style="left:1661px;top:363px;width:200px;text-align:center;font-size:24px;color:rgba(128,128,128,0.29);transform:rotate(-44deg);pointer-events:none;">www.cfchi.com</div>
<div class="t" style="left:-49px;top:583px;width:200px;text-align:center;font-size:24px;color:rgba(128,128,128,0.29);transform:rotate(-44deg);pointer-events:none;">www.cfchi.com</div>
<div class="t" style="left:236px;top:583px;width:200px;text-align:center;font-size:24px;color:rgba(128,128,128,0.29);transform:rotate(-44deg);pointer-events:none;">www.cfchi.com</div>
<div class="t" style="left:521px;top:583px;width:200px;text-align:center;font-size:24px;color:rgba(128,128,128,0.29);transform:rotate(-44deg);pointer-events:none;">www.cfchi.com</div>
<div class="t" style="left:806px;top:583px;width:200px;text-align:center;font-size:24px;color:rgba(128,128,128,0.29);transform:rotate(-44deg);pointer-events:none;">www.cfchi.com</div>
<div class="t" style="left:1091px;top:583px;width:200px;text-align:center;font-size:24px;color:rgba(128,128,128,0.29);transform:rotate(-44deg);pointer-events:none;">www.cfchi.com</div>
<div class="t" style="left:1376px;top:583px;width:200px;text-align:center;font-size:24px;color:rgba(128,128,128,0.29);transform:rotate(-44deg);pointer-events:none;">www.cfchi.com</div>
<div class="t" style="left:1661px;top:583px;width:200px;text-align:center;font-size:24px;color:rgba(128,128,128,0.29);transform:rotate(-44deg);pointer-events:none;">www.cfchi.com</div>
<div class="t" style="left:-49px;top:803px;width:200px;text-align:center;font-size:24px;color:rgba(128,128,128,0.29);transform:rotate(-44deg);pointer-events:none;">www.cfchi.com</div>
<div class="t" style="left:236px;top:803px;width:200px;text-align:center;font-size:24px;color:rgba(128,128,128,0.29);transform:rotate(-44deg);pointer-events:none;">www.cfchi.com</div>
<div class="t" style="left:521px;top:803px;width:200px;text-align:center;font-size:24px;color:rgba(128,128,128,0.29);transform:rotate(-44deg);pointer-events:none;">www.cfchi.com</div>
<div class="t" style="left:806px;top:803px;width:200px;text-align:center;font-size:24px;color:rgba(128,128,128,0.29);transform:rotate(-44deg);pointer-events:none;">www.cfchi.com</div>
<div class="t" style="left:1091px;top:803px;width:200px;text-align:center;font-size:24px;color:rgba(128,128,128,0.29);transform:rotate(-44deg);pointer-events:none;">www.cfchi.com</div>
<div class="t" style="left:1376px;top:803px;width:200px;text-align:center;font-size:24px;color:rgba(128,128,128,0.29);transform:rotate(-44deg);pointer-events:none;">www.cfchi.com</div>
<div class="t" style="left:1661px;top:803px;width:200px;text-align:center;font-size:24px;color:rgba(128,128,128,0.29);transform:rotate(-44deg);pointer-events:none;">www.cfchi.com</div>
</body></html>
